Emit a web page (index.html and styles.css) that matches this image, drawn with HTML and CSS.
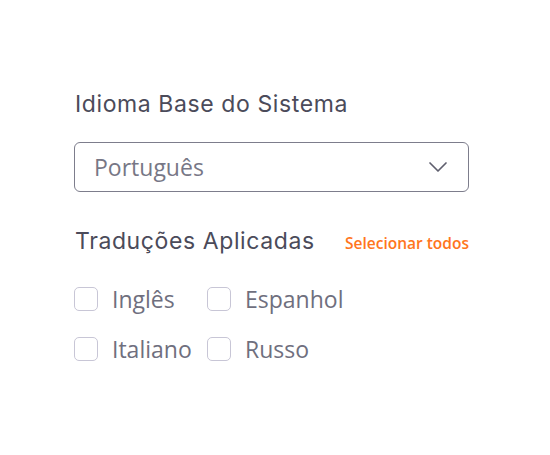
FILE: index.html
```html
<!DOCTYPE html>
<html lang="pt">
<head>
    <meta charset="UTF-8">
    <meta name="viewport" content="width=device-width, initial-scale=1.0">
    <title>Idioma</title>
    <link rel="stylesheet" href="styles.css">
</head>
<body>
    <div class="settings">
        <label class="field-label" for="base-lang">Idioma Base do Sistema</label>
        <div class="select">
            <span class="select-value" id="base-lang">Português</span>
            <svg class="chevron" width="20" height="12" viewBox="0 0 20 12">
                <path d="M2 2 L10 10 L18 2" fill="none" stroke="#5f5f6e" stroke-width="1.7" stroke-linecap="round" stroke-linejoin="round"/>
            </svg>
        </div>

        <div class="section-head">
            <span class="field-label">Traduções Aplicadas</span>
            <a href="#" class="select-all">Selecionar todos</a>
        </div>

        <div class="options">
            <label class="option"><span class="box"></span>Inglês</label>
            <label class="option"><span class="box"></span>Espanhol</label>
            <label class="option"><span class="box"></span>Italiano</label>
            <label class="option"><span class="box"></span>Russo</label>
        </div>
    </div>
</body>
</html>
```

FILE: styles.css
```css
body {
    margin: 0;
    padding: 0;
    background-color: #ffffff;
    font-family: 'Open Sans', 'Noto Sans', sans-serif;
    color: #4b4b5a;
}

.settings {
    width: 395px;
    padding: 90px 0 0 74px;
    display: flex;
    flex-direction: column;
}

.field-label {
    display: block;
    font-family: 'Inter', 'Lato', sans-serif;
    font-size: 23px;
    font-weight: 400;
    color: #4b4b5a;
    letter-spacing: 0.6px;
    padding-left: 1px;
}

.select {
    box-sizing: border-box;
    margin-top: 24px;
    height: 50px;
    border: 1.5px solid #7d7d8c;
    border-radius: 6px;
    display: flex;
    align-items: center;
    justify-content: space-between;
    padding: 0 20px 0 19px;
}

.select-value {
    font-size: 23px;
    color: #777786;
}

.section-head {
    margin-top: 35px;
    display: flex;
    align-items: baseline;
    justify-content: space-between;
}

.select-all {
    font-size: 15.5px;
    font-weight: 600;
    color: #ff7520;
    text-decoration: none;
}

.options {
    margin-top: 28px;
    display: grid;
    grid-template-columns: 133px auto;
    row-gap: 18px;
}

.option {
    display: flex;
    align-items: center;
    gap: 14px;
    font-size: 23px;
    color: #6f6f7e;
    height: 32px;
}

.box {
    box-sizing: border-box;
    width: 24px;
    height: 24px;
    border: 1.5px solid #c8c6d6;
    border-radius: 5px;
    flex-shrink: 0;
}
```
